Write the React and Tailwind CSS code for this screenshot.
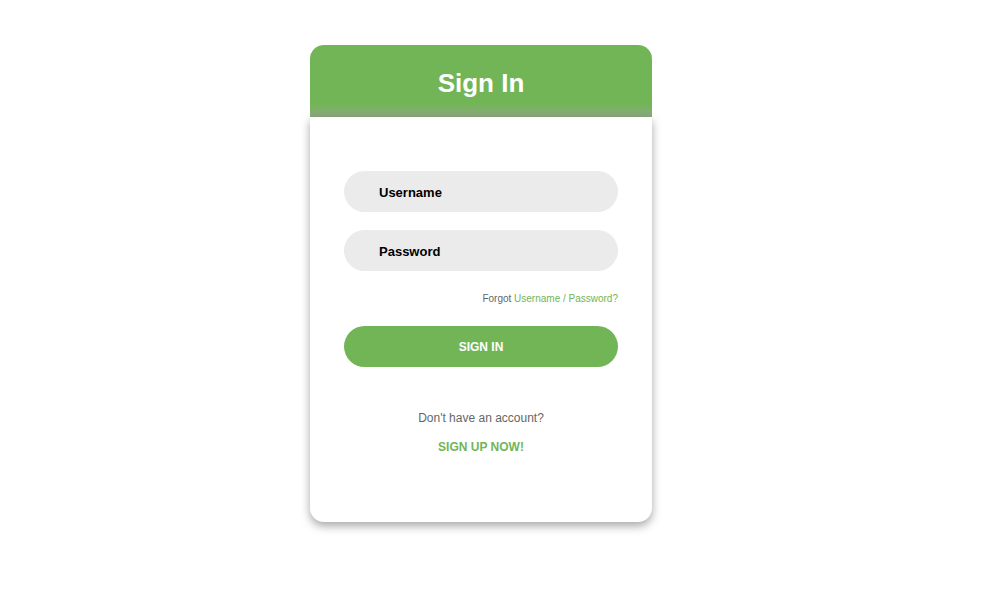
export default function App() {
  return (
    <div className="min-h-[605px] bg-white pt-[45px] font-['Liberation_Sans',Arial,sans-serif]">
      <div className="ml-[310px] w-[342px]">
        <div className="h-[72px] rounded-t-[14px] bg-[linear-gradient(to_bottom,#72b556_0%,#72b556_82%,#8ea883_100%)] flex items-center justify-center pt-[4px]">
          <h1 className="text-[26px] font-bold text-white leading-none">Sign In</h1>
        </div>
        <div className="relative z-10 h-[405px] rounded-b-[14px] bg-white shadow-[0_4px_10px_rgba(0,0,0,0.35)] px-[34px] pt-[54px]">
          <div className="h-[41px] rounded-full bg-[#ebebeb] flex items-center pl-[35px] pt-[2px]">
            <span className="text-[13px] font-bold text-black">Username</span>
          </div>
          <div className="mt-[18px] h-[41px] rounded-full bg-[#ebebeb] flex items-center pl-[35px] pt-[2px]">
            <span className="text-[13px] font-bold text-black">Password</span>
          </div>
          <div className="mt-[23px] text-right text-[10px] leading-none text-[#666]">
            Forgot <span className="text-[#72b556]">Username / Password?</span>
          </div>
          <button className="mt-[22px] w-full h-[41px] rounded-full bg-[#72b556] text-white text-[12px] font-bold">
            SIGN IN
          </button>
          <p className="mt-[45px] text-center text-[12px] text-[#666] leading-none">Don't have an account?</p>
          <p className="mt-[17px] text-center text-[12px] font-bold text-[#72b556] leading-none">SIGN UP NOW!</p>
        </div>
      </div>
    </div>
  );
}
